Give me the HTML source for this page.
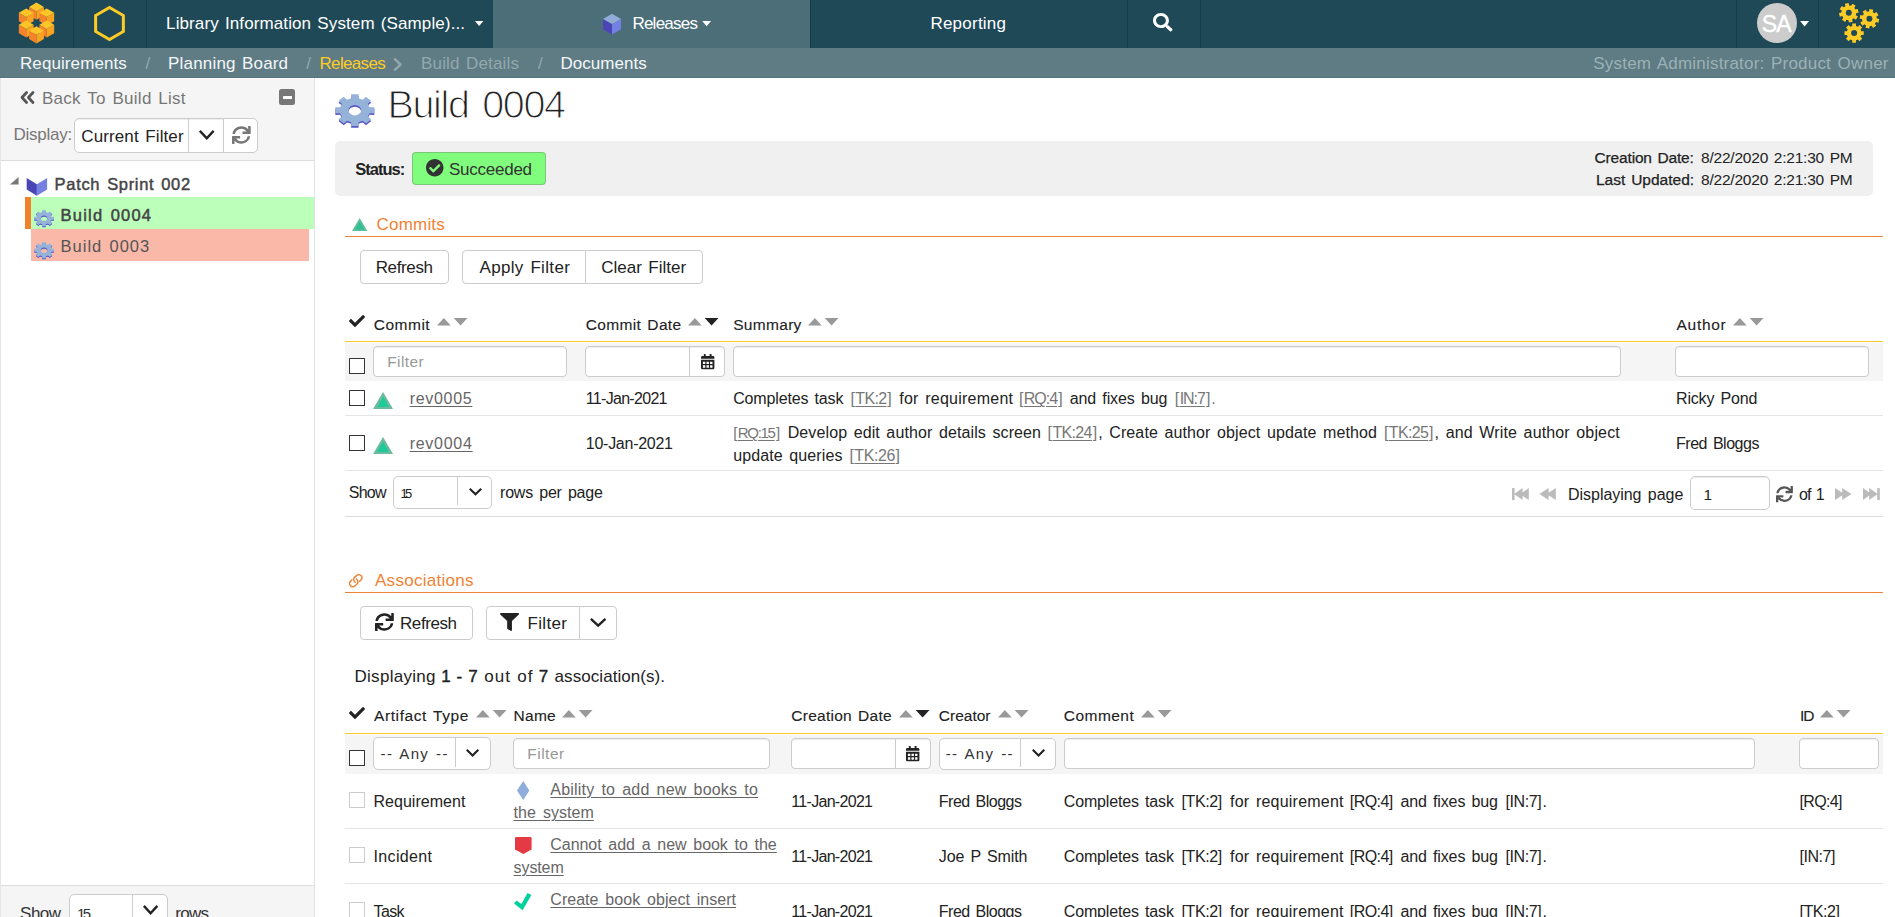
<!DOCTYPE html>
<html lang="en"><head><meta charset="utf-8"><title>Build 0004</title>
<style>
html,body{margin:0;padding:0;background:#fff;}
body{width:1895px;height:917px;overflow:hidden;position:relative;font-family:"Liberation Sans",sans-serif;}
.b{position:absolute;box-sizing:border-box;}
.t{position:absolute;white-space:nowrap;}
svg{display:block;overflow:visible;}
</style></head><body>
<div class="b" style="left:0.00px;top:0.00px;width:1895.00px;height:48.00px;background:#1f4957;"></div>
<div class="b" style="left:493.00px;top:0.00px;width:317.00px;height:48.00px;background:#4c6e78;"></div>
<div class="b" style="left:73.00px;top:0.00px;width:1.00px;height:48.00px;background:#163c48;"></div>
<div class="b" style="left:146.00px;top:0.00px;width:1.00px;height:48.00px;background:#163c48;"></div>
<div class="b" style="left:810.00px;top:0.00px;width:1.00px;height:48.00px;background:#163c48;"></div>
<div class="b" style="left:1127.00px;top:0.00px;width:1.00px;height:48.00px;background:#163c48;"></div>
<div class="b" style="left:1200.00px;top:0.00px;width:1.00px;height:48.00px;background:#163c48;"></div>
<div class="b" style="left:1736.00px;top:0.00px;width:1.00px;height:48.00px;background:#163c48;"></div>
<div class="b" style="left:1818.00px;top:0.00px;width:1.00px;height:48.00px;background:#163c48;"></div>
<div class="b" style="left:0.00px;top:48.00px;width:1895.00px;height:30.00px;background:#5f7c85;border-bottom:1px solid #53737d;"></div>
<div class="b" style="left:0.00px;top:78.00px;width:315.00px;height:839.00px;background:#fff;border-right:1px solid #e2e2e2;border-left:1px solid #e6e6e6;"></div>
<div class="b" style="left:1.00px;top:79.00px;width:313.00px;height:82.00px;background:#f5f5f5;border-bottom:1px solid #ddd;"></div>
<div class="b" style="left:1.00px;top:884.50px;width:313.00px;height:33.00px;background:#f5f5f5;border-top:1px solid #ddd;"></div>
<div class="b" style="left:335.00px;top:141.00px;width:1538.00px;height:55.00px;background:#f0f0f0;border-radius:5px;"></div>
<span class="t" style="left:166.10px;top:15px;font-size:17.0px;line-height:17px;color:#fff;letter-spacing:0.104px;word-spacing:1.36px;">Library Information System (Sample)...</span>
<span class="t" style="left:632.40px;top:15px;font-size:17.0px;line-height:17px;color:#fff;letter-spacing:-0.756px;">Releases</span>
<span class="t" style="left:930.40px;top:15px;font-size:17.0px;line-height:17px;color:#fff;letter-spacing:0.238px;">Reporting</span>
<svg class="b" style="left:475.00px;top:21.00px;" width="8.40" height="5.20" viewBox="0 0 10 6" ><path d="M0 0H10L5 6Z" fill="#fff"/></svg>
<svg class="b" style="left:702.00px;top:21.30px;" width="9.30" height="5.30" viewBox="0 0 10 6" ><path d="M0 0H10L5 6Z" fill="#fff"/></svg>
<svg class="b" style="left:1800.20px;top:20.80px;" width="9.20" height="5.40" viewBox="0 0 10 6" ><path d="M0 0H10L5 6Z" fill="#fff"/></svg>
<div class="b" style="left:1757.00px;top:3.00px;width:40.00px;height:40.00px;background:#ccc;border-radius:50%;"></div>
<span class="t" style="left:1761.80px;top:13px;font-size:23.0px;line-height:23px;color:#fff;letter-spacing:-1.005px;-webkit-text-stroke:0.45px #fff;">SA</span>
<span class="t" style="left:20.00px;top:55px;font-size:17.0px;line-height:17px;color:#f4f7f8;letter-spacing:0.089px;">Requirements</span>
<span class="t" style="left:145.50px;top:55px;font-size:17.0px;line-height:17px;color:#92a8ad;">/</span>
<span class="t" style="left:168.10px;top:55px;font-size:17.0px;line-height:17px;color:#f4f7f8;letter-spacing:0.182px;word-spacing:1.36px;">Planning Board</span>
<span class="t" style="left:306.20px;top:55px;font-size:17.0px;line-height:17px;color:#92a8ad;">/</span>
<span class="t" style="left:319.50px;top:55px;font-size:17.0px;line-height:17px;color:#fdcb26;letter-spacing:-0.670px;">Releases</span>
<svg class="b" style="left:393.30px;top:58.20px;" width="10.00" height="13.00" viewBox="0 0 10 13" ><path d="M1.8 1.2L7.6 6.5L1.8 11.8" fill="none" stroke="#92a8ad" stroke-width="2.4" stroke-linecap="round" stroke-linejoin="round"/></svg>
<span class="t" style="left:421.00px;top:55px;font-size:17.0px;line-height:17px;color:#92a8ad;letter-spacing:0.177px;word-spacing:1.36px;">Build Details</span>
<span class="t" style="left:538.00px;top:55px;font-size:17.0px;line-height:17px;color:#92a8ad;">/</span>
<span class="t" style="left:560.40px;top:55px;font-size:17.0px;line-height:17px;color:#f4f7f8;letter-spacing:0.035px;">Documents</span>
<span class="t" style="left:1593.30px;top:55px;font-size:17.0px;line-height:17px;color:#9cb1b5;letter-spacing:0.195px;word-spacing:1.70px;">System Administrator: Product Owner</span>
<svg class="b" style="left:0.00px;top:0.00px;" width="73.00" height="48.00" viewBox="0 0 73 48" ><path d="M29.10 6.88L36.50 11.15L36.50 19.69L29.10 15.42Z" fill="#f4832a"/><path d="M43.90 6.88L36.50 11.15L36.50 19.69L43.90 15.42Z" fill="#f9a320"/><path d="M36.50 2.61L43.90 6.88L36.50 11.15L29.10 6.88Z" fill="#fdc527"/><path d="M18.84 12.80L26.24 17.08L26.24 25.62L18.84 21.35Z" fill="#f4832a"/><path d="M33.64 12.80L26.24 17.08L26.24 25.62L33.64 21.35Z" fill="#f9a320"/><path d="M26.24 8.53L33.64 12.80L26.24 17.08L18.84 12.80Z" fill="#fdc527"/><path d="M39.36 12.80L46.76 17.08L46.76 25.62L39.36 21.35Z" fill="#f4832a"/><path d="M54.16 12.80L46.76 17.08L46.76 25.62L54.16 21.35Z" fill="#f9a320"/><path d="M46.76 8.53L54.16 12.80L46.76 17.08L39.36 12.80Z" fill="#fdc527"/><path d="M18.84 24.65L26.24 28.92L26.24 37.47L18.84 33.20Z" fill="#f4832a"/><path d="M33.64 24.65L26.24 28.92L26.24 37.47L33.64 33.20Z" fill="#f9a320"/><path d="M26.24 20.38L33.64 24.65L26.24 28.92L18.84 24.65Z" fill="#fdc527"/><path d="M39.36 24.65L46.76 28.92L46.76 37.47L39.36 33.20Z" fill="#f4832a"/><path d="M54.16 24.65L46.76 28.92L46.76 37.47L54.16 33.20Z" fill="#f9a320"/><path d="M46.76 20.38L54.16 24.65L46.76 28.92L39.36 24.65Z" fill="#fdc527"/><path d="M29.10 30.58L36.50 34.85L36.50 43.39L29.10 39.12Z" fill="#f4832a"/><path d="M43.90 30.58L36.50 34.85L36.50 43.39L43.90 39.12Z" fill="#f9a320"/><path d="M36.50 26.31L43.90 30.58L36.50 34.85L29.10 30.58Z" fill="#fdc527"/></svg>
<svg class="b" style="left:73.00px;top:0.00px;" width="73.00" height="48.00" viewBox="73 0 73 48" ><path d="M109.50 7.50L123.36 15.50L123.36 31.50L109.50 39.50L95.64 31.50L95.64 15.50Z" fill="none" stroke="#fdcb26" stroke-width="3" stroke-linejoin="miter"/></svg>
<svg class="b" style="left:600.00px;top:10.00px;" width="24.00" height="28.00" viewBox="600 10 24 28" ><path d="M603.00 18.90L612.00 24.10L612.00 34.49L603.00 29.30Z" fill="#4a45b5"/><path d="M621.00 18.90L612.00 24.10L612.00 34.49L621.00 29.30Z" fill="#7480e2"/><path d="M612.00 13.71L621.00 18.90L612.00 24.10L603.00 18.90Z" fill="#92acd8"/></svg>
<svg class="b" style="left:1152.80px;top:13.20px;" width="19.60" height="18.50" viewBox="0 0 512 512" preserveAspectRatio="none"><path d="M505 442.7L405.3 343c-4.5-4.5-10.6-7-17-7H372c27.6-35.3 44-79.7 44-128C416 93.1 322.9 0 208 0S0 93.1 0 208s93.1 208 208 208c48.3 0 92.7-16.4 128-44v16.3c0 6.4 2.5 12.5 7 17l99.700 99.700c9.400 9.400 24.600 9.400 33.900 0l28.300-28.300c9.400-9.400 9.400-24.600.1-34zM208 336c-70.700 0-128-57.200-128-128 0-70.700 57.200-128 128-128 70.700 0 128 57.200 128 128 0 70.700-57.200 128-128 128z" fill="#fff"/></svg>
<svg class="b" style="left:1830.00px;top:0.00px;" width="65.00" height="48.00" viewBox="1830 0 65 48" ><path fill-rule="evenodd" fill="#fdcb26" d="M1855.43 9.51L1857.81 8.93L1858.60 12.67L1856.19 13.11L1855.81 15.16L1857.90 16.43L1855.82 19.64L1853.81 18.25L1852.09 19.43L1852.67 21.81L1848.93 22.60L1848.49 20.19L1846.44 19.81L1845.17 21.90L1841.96 19.82L1843.35 17.81L1842.17 16.09L1839.79 16.67L1839.00 12.93L1841.41 12.49L1841.79 10.44L1839.70 9.17L1841.78 5.96L1843.79 7.35L1845.51 6.17L1844.93 3.79L1848.67 3.00L1849.11 5.41L1851.16 5.79L1852.43 3.70L1855.64 5.78L1854.25 7.79ZM1845.80 12.80A3.00 3.00 0 1 0 1851.80 12.80A3.00 3.00 0 1 0 1845.80 12.80Z"/><path fill-rule="evenodd" fill="#fdcb26" d="M1876.79 18.49L1879.20 18.93L1878.41 22.67L1876.03 22.09L1874.85 23.81L1876.24 25.82L1873.03 27.90L1871.76 25.81L1869.71 26.19L1869.27 28.60L1865.53 27.81L1866.11 25.43L1864.39 24.25L1862.38 25.64L1860.30 22.43L1862.39 21.16L1862.01 19.11L1859.60 18.67L1860.39 14.93L1862.77 15.51L1863.95 13.79L1862.56 11.78L1865.77 9.70L1867.04 11.79L1869.09 11.41L1869.53 9.00L1873.27 9.79L1872.69 12.17L1874.41 13.35L1876.42 11.96L1878.50 15.17L1876.41 16.44ZM1866.40 18.80A3.00 3.00 0 1 0 1872.40 18.80A3.00 3.00 0 1 0 1866.40 18.80Z"/><path fill-rule="evenodd" fill="#fdcb26" d="M1861.27 31.26L1863.71 31.19L1863.71 35.01L1861.27 34.94L1860.47 36.87L1862.25 38.55L1859.55 41.25L1857.87 39.47L1855.94 40.27L1856.01 42.71L1852.19 42.71L1852.26 40.27L1850.33 39.47L1848.65 41.25L1845.95 38.55L1847.73 36.87L1846.93 34.94L1844.49 35.01L1844.49 31.19L1846.93 31.26L1847.73 29.33L1845.95 27.65L1848.65 24.95L1850.33 26.73L1852.26 25.93L1852.19 23.49L1856.01 23.49L1855.94 25.93L1857.87 26.73L1859.55 24.95L1862.25 27.65L1860.47 29.33ZM1851.10 33.10A3.00 3.00 0 1 0 1857.10 33.10A3.00 3.00 0 1 0 1851.10 33.10Z"/></svg>
<svg class="b" style="left:20.00px;top:91.30px;" width="15.00" height="13.00" viewBox="0 0 15 13" ><path d="M6.6 1.5L2 6.5L6.6 11.5M13 1.5L8.4 6.5L13 11.5" fill="none" stroke="#555" stroke-width="2.7" stroke-linecap="round" stroke-linejoin="round"/></svg>
<span class="t" style="left:42.00px;top:90px;font-size:17.0px;line-height:17px;color:#777;letter-spacing:0.272px;word-spacing:1.70px;">Back To Build List</span>
<div class="b" style="left:279.30px;top:89.30px;width:16.20px;height:15.40px;background:#777;border-radius:2.5px;"></div>
<div class="b" style="left:282.50px;top:95.60px;width:9.80px;height:3.00px;background:#fff;border-radius:.5px;"></div>
<span class="t" style="left:13.60px;top:126px;font-size:17.0px;line-height:17px;color:#777;letter-spacing:-0.262px;">Display:</span>
<div class="b" style="left:74.00px;top:118.00px;width:150.00px;height:35.00px;background:#fff;border:1px solid #ccc;border-radius:5px 0 0 5px;box-shadow:inset 0 1px 1px rgba(0,0,0,.075);"></div>
<div class="b" style="left:188.00px;top:119.00px;width:1.00px;height:33.00px;background:#ccc;"></div>
<span class="t" style="left:81.30px;top:128px;font-size:17.0px;line-height:17px;color:#222;letter-spacing:0.108px;word-spacing:1.70px;">Current Filter</span>
<svg class="b" style="left:198.80px;top:130.00px;" width="15.50" height="10.00" viewBox="0 0 15.50 10.00" ><path d="M0.86 0.86L7.75 8.27L14.64 0.86" fill="none" stroke="#222" stroke-width="2.40" stroke-linejoin="miter"/></svg>
<div class="b" style="left:223.00px;top:118.00px;width:35.00px;height:34.50px;background:#fff;border:1px solid #ccc;border-radius:0 5px 5px 0;"></div>
<svg class="b" style="left:231.70px;top:126.00px;" width="18.70" height="18.00" viewBox="0 0 512 512" preserveAspectRatio="none"><path d="M440.65 12.57l4 82.77A247.16 247.16 0 0 0 255.83 8C134.73 8 33.91 94.92 12.29 209.82A12 12 0 0 0 24.09 224h49.05a12 12 0 0 0 11.67-9.26 175.91 175.91 0 0 1 317-56.94l-101.46-4.86a12 12 0 0 0-12.57 12v47.41a12 12 0 0 0 12 12H500a12 12 0 0 0 12-12V12a12 12 0 0 0-12-12h-47.37a12 12 0 0 0-11.98 12.57zM255.83 432a175.61 175.61 0 0 1-146-77.8l101.8 4.87a12 12 0 0 0 12.57-12v-47.4a12 12 0 0 0-12-12H12a12 12 0 0 0-12 12V500a12 12 0 0 0 12 12h47.35a12 12 0 0 0 12-12.6l-4.15-82.57A247.17 247.17 0 0 0 255.83 504c121.11 0 221.93-86.92 243.55-201.82a12 12 0 0 0-11.8-14.18h-49.05a12 12 0 0 0-11.67 9.26A175.86 175.86 0 0 1 255.83 432z" fill="#777"/></svg>
<svg class="b" style="left:9.60px;top:176.50px;" width="8.60" height="7.60" viewBox="0 0 8.6 7.6" ><path d="M8.6 0V7.6H0Z" fill="#777"/></svg>
<svg class="b" style="left:26.00px;top:176.00px;" width="23.00" height="21.00" viewBox="26 176 23 21" ><path d="M26.7 178L36.9 184.2V195.7L26.7 189.5Z" fill="#4a45b5"/><path d="M47.1 178L36.9 184.2V195.7L47.1 189.5Z" fill="#7480e2"/></svg>
<span class="t" style="left:54.60px;top:176px;font-size:16.5px;line-height:17px;color:#444;letter-spacing:0.685px;word-spacing:1.65px;-webkit-text-stroke:0.45px #444;">Patch Sprint 002</span>
<div class="b" style="left:25.00px;top:197.00px;width:6.00px;height:32.00px;background:#f0822e;"></div>
<div class="b" style="left:31.00px;top:197.00px;width:283.00px;height:32.00px;background:#bbffbb;"></div>
<div class="b" style="left:31.00px;top:229.00px;width:278.00px;height:32.00px;background:#f9b8a8;"></div>
<svg class="b" style="left:32.00px;top:208.20px;" width="24.10" height="21.50" viewBox="32.00 208.20 24.10 21.50" ><path fill-rule="evenodd" fill="#5a57c9" d="M51.46 218.00L53.92 217.95L53.92 221.05L51.46 221.00L50.59 222.71L52.37 224.10L49.69 226.29L47.99 224.84L45.89 225.55L45.95 227.55L42.15 227.55L42.21 225.55L40.11 224.84L38.41 226.29L35.73 224.10L37.51 222.71L36.64 221.00L34.18 221.05L34.18 217.95L36.64 218.00L37.51 216.29L35.73 214.90L38.41 212.71L40.11 214.16L42.21 213.45L42.15 211.45L45.95 211.45L45.89 213.45L47.99 214.16L49.69 212.71L52.37 214.90L50.59 216.29ZM40.83 219.50A3.22 2.62 0 1 0 47.27 219.50A3.22 2.62 0 1 0 40.83 219.50Z"/><path fill-rule="evenodd" fill="#95b3d9" d="M51.46 216.90L53.92 216.85L53.92 219.95L51.46 219.90L50.59 221.61L52.37 223.00L49.69 225.19L47.99 223.74L45.89 224.45L45.95 226.45L42.15 226.45L42.21 224.45L40.11 223.74L38.41 225.19L35.73 223.00L37.51 221.61L36.64 219.90L34.18 219.95L34.18 216.85L36.64 216.90L37.51 215.19L35.73 213.80L38.41 211.61L40.11 213.06L42.21 212.35L42.15 210.35L45.95 210.35L45.89 212.35L47.99 213.06L49.69 211.61L52.37 213.80L50.59 215.19ZM40.83 218.40A3.22 2.62 0 1 0 47.27 218.40A3.22 2.62 0 1 0 40.83 218.40Z"/></svg>
<svg class="b" style="left:32.00px;top:240.10px;" width="24.10" height="21.50" viewBox="32.00 240.10 24.10 21.50" ><path fill-rule="evenodd" fill="#5a57c9" d="M51.46 249.90L53.92 249.85L53.92 252.95L51.46 252.90L50.59 254.61L52.37 256.00L49.69 258.19L47.99 256.74L45.89 257.45L45.95 259.45L42.15 259.45L42.21 257.45L40.11 256.74L38.41 258.19L35.73 256.00L37.51 254.61L36.64 252.90L34.18 252.95L34.18 249.85L36.64 249.90L37.51 248.19L35.73 246.80L38.41 244.61L40.11 246.06L42.21 245.35L42.15 243.35L45.95 243.35L45.89 245.35L47.99 246.06L49.69 244.61L52.37 246.80L50.59 248.19ZM40.83 251.40A3.22 2.62 0 1 0 47.27 251.40A3.22 2.62 0 1 0 40.83 251.40Z"/><path fill-rule="evenodd" fill="#95b3d9" d="M51.46 248.80L53.92 248.75L53.92 251.85L51.46 251.80L50.59 253.51L52.37 254.90L49.69 257.09L47.99 255.64L45.89 256.35L45.95 258.35L42.15 258.35L42.21 256.35L40.11 255.64L38.41 257.09L35.73 254.90L37.51 253.51L36.64 251.80L34.18 251.85L34.18 248.75L36.64 248.80L37.51 247.09L35.73 245.70L38.41 243.51L40.11 244.96L42.21 244.25L42.15 242.25L45.95 242.25L45.89 244.25L47.99 244.96L49.69 243.51L52.37 245.70L50.59 247.09ZM40.83 250.30A3.22 2.62 0 1 0 47.27 250.30A3.22 2.62 0 1 0 40.83 250.30Z"/></svg>
<span class="t" style="left:60.60px;top:207px;font-size:16.5px;line-height:17px;color:#444;letter-spacing:1.199px;word-spacing:1.65px;-webkit-text-stroke:0.50px #444;">Build 0004</span>
<span class="t" style="left:60.60px;top:238px;font-size:16.5px;line-height:17px;color:#555;letter-spacing:0.999px;word-spacing:1.65px;">Build 0003</span>
<span class="t" style="left:20.00px;top:905px;font-size:17.0px;line-height:17px;color:#333;letter-spacing:-0.462px;">Show</span>
<div class="b" style="left:68.60px;top:893.60px;width:99.40px;height:34.00px;background:#fff;border:1px solid #ccc;border-radius:5px;"></div>
<div class="b" style="left:132.40px;top:894.60px;width:1.00px;height:30.00px;background:#ccc;"></div>
<span class="t" style="left:77.00px;top:906px;font-size:15.0px;line-height:15px;color:#333;letter-spacing:-2.650px;">15</span>
<svg class="b" style="left:143.10px;top:905.00px;" width="15.20" height="10.00" viewBox="0 0 15.20 10.00" ><path d="M0.86 0.86L7.60 8.27L14.34 0.86" fill="none" stroke="#222" stroke-width="2.40" stroke-linejoin="miter"/></svg>
<span class="t" style="left:175.20px;top:905px;font-size:17.0px;line-height:17px;color:#333;letter-spacing:-0.690px;">rows</span>
<svg class="b" style="left:333.20px;top:91.90px;" width="43.70" height="38.10" viewBox="333.20 91.90 43.70 38.10" ><path fill-rule="evenodd" fill="#5a57c9" d="M369.69 108.83L374.54 108.74L374.54 114.86L369.69 114.77L367.97 118.15L371.48 120.89L366.18 125.21L362.83 122.35L358.69 123.75L358.80 127.71L351.30 127.71L351.41 123.75L347.27 122.35L343.92 125.21L338.62 120.89L342.13 118.15L340.41 114.77L335.56 114.86L335.56 108.74L340.41 108.83L342.13 105.45L338.62 102.71L343.92 98.39L347.27 101.25L351.41 99.85L351.30 95.89L358.80 95.89L358.69 99.85L362.83 101.25L366.18 98.39L371.48 102.71L367.97 105.45ZM348.70 111.80A6.35 5.18 0 1 0 361.40 111.80A6.35 5.18 0 1 0 348.70 111.80Z"/><path fill-rule="evenodd" fill="#95b3d9" d="M369.69 107.13L374.54 107.04L374.54 113.16L369.69 113.07L367.97 116.45L371.48 119.19L366.18 123.51L362.83 120.65L358.69 122.05L358.80 126.01L351.30 126.01L351.41 122.05L347.27 120.65L343.92 123.51L338.62 119.19L342.13 116.45L340.41 113.07L335.56 113.16L335.56 107.04L340.41 107.13L342.13 103.75L338.62 101.01L343.92 96.69L347.27 99.55L351.41 98.15L351.30 94.19L358.80 94.19L358.69 98.15L362.83 99.55L366.18 96.69L371.48 101.01L367.97 103.75ZM348.70 110.10A6.35 5.18 0 1 0 361.40 110.10A6.35 5.18 0 1 0 348.70 110.10Z"/></svg>
<span class="t" style="left:387.40px;top:84px;font-size:39.5px;line-height:40px;color:#222;letter-spacing:-1.332px;word-spacing:3.95px;-webkit-text-stroke:1.15px #fff;">Build 0004</span>
<span class="t" style="left:355.20px;top:161px;font-size:16.5px;line-height:17px;color:#222;letter-spacing:-0.972px;font-weight:700;">Status:</span>
<div class="b" style="left:412.40px;top:152.00px;width:133.20px;height:32.60px;background:#80fd7c;border:1px solid rgba(110,110,110,.38);border-radius:4px;"></div>
<svg class="b" style="left:426.00px;top:159.40px;" width="17.50" height="17.50" viewBox="8 8 496 496" preserveAspectRatio="none"><path d="M504 256c0 136.967-111.033 248-248 248S8 392.967 8 256 119.033 8 256 8s248 111.033 248 248zM227.314 387.314l184-184c6.248-6.248 6.248-16.379 0-22.627l-22.627-22.627c-6.248-6.249-16.379-6.249-22.628 0L216 308.118l-70.059-70.059c-6.248-6.248-16.379-6.248-22.628 0l-22.627 22.627c-6.248 6.248-6.248 16.379 0 22.627l104 104c6.249 6.249 16.379 6.249 22.628.001z" fill="#333"/></svg>
<span class="t" style="left:448.90px;top:161px;font-size:17.0px;line-height:17px;color:#333;letter-spacing:-0.236px;">Succeeded</span>
<span class="t" style="left:1594.60px;top:150px;font-size:15.5px;line-height:16px;color:#222;letter-spacing:-0.171px;word-spacing:1.55px;-webkit-text-stroke:0.25px #222;">Creation Date:</span>
<span class="t" style="left:1701.00px;top:150px;font-size:15.5px;line-height:16px;color:#222;letter-spacing:-0.206px;word-spacing:1.55px;">8/22/2020 2:21:30 PM</span>
<span class="t" style="left:1596.00px;top:172px;font-size:15.5px;line-height:16px;color:#222;word-spacing:1.55px;-webkit-text-stroke:0.25px #222;">Last Updated:</span>
<span class="t" style="left:1701.00px;top:172px;font-size:15.5px;line-height:16px;color:#222;letter-spacing:-0.206px;word-spacing:1.55px;">8/22/2020 2:21:30 PM</span>
<svg class="b" style="left:351.70px;top:218.00px;" width="15.40" height="13.00" viewBox="0 0 20 17" ><path d="M10 0L20 17H0Z" fill="#5fbf9d"/><path d="M10 4.6L16 15H4Z" fill="#2fbf93"/></svg>
<span class="t" style="left:376.50px;top:216px;font-size:17.0px;line-height:17px;color:#f08234;letter-spacing:0.206px;">Commits</span>
<div class="b" style="left:345.00px;top:236.00px;width:1538.00px;height:1.00px;background:#f08234;"></div>
<div class="b" style="left:360.00px;top:250.00px;width:89.00px;height:34.00px;background:#fff;border:1px solid #ccc;border-radius:4px;"></div>
<span class="t" style="left:375.70px;top:259px;font-size:17.0px;line-height:17px;color:#222;letter-spacing:-0.367px;">Refresh</span>
<div class="b" style="left:462.00px;top:250.00px;width:123.60px;height:34.00px;background:#fff;border:1px solid #ccc;border-radius:4px 0 0 4px;"></div>
<div class="b" style="left:584.60px;top:250.00px;width:118.40px;height:34.00px;background:#fff;border:1px solid #ccc;border-radius:0 4px 4px 0;"></div>
<span class="t" style="left:479.50px;top:259px;font-size:17.0px;line-height:17px;color:#222;letter-spacing:0.327px;word-spacing:1.70px;">Apply Filter</span>
<span class="t" style="left:601.30px;top:259px;font-size:17.0px;line-height:17px;color:#222;word-spacing:1.70px;">Clear Filter</span>
<svg class="b" style="left:349.00px;top:315.40px;" width="16.00" height="12.00" viewBox="0 65 512 382" preserveAspectRatio="none"><path d="M173.898 439.404l-166.4-166.4c-9.997-9.997-9.997-26.206 0-36.204l36.203-36.204c9.997-9.998 26.207-9.998 36.204 0L192 312.69 432.095 72.596c9.997-9.997 26.207-9.997 36.204 0l36.203 36.204c9.997 9.997 9.997 26.206 0 36.204l-294.4 294.401c-9.998 9.997-26.207 9.997-36.204-.001z" fill="#222"/></svg>
<span class="t" style="left:373.70px;top:317px;font-size:15.5px;line-height:16px;color:#222;letter-spacing:0.520px;-webkit-text-stroke:0.12px #222;">Commit</span>
<svg class="b" style="left:437.30px;top:318.40px;" width="30.50" height="7.60" viewBox="0 0 30.5 7.6" ><path d="M0 7.6L6.85 0L13.7 7.6Z" fill="#999"/><path d="M16.7 0H30.5L23.6 7.6Z" fill="#999"/></svg>
<span class="t" style="left:585.80px;top:317px;font-size:15.5px;line-height:16px;color:#222;letter-spacing:0.331px;word-spacing:1.55px;-webkit-text-stroke:0.12px #222;">Commit Date</span>
<svg class="b" style="left:688.40px;top:318.40px;" width="30.50" height="7.60" viewBox="0 0 30.5 7.6" ><path d="M0 7.6L6.85 0L13.7 7.6Z" fill="#999"/><path d="M16.7 0H30.5L23.6 7.6Z" fill="#222"/></svg>
<span class="t" style="left:733.20px;top:317px;font-size:15.5px;line-height:16px;color:#222;letter-spacing:0.310px;-webkit-text-stroke:0.12px #222;">Summary</span>
<svg class="b" style="left:808.40px;top:318.40px;" width="30.50" height="7.60" viewBox="0 0 30.5 7.6" ><path d="M0 7.6L6.85 0L13.7 7.6Z" fill="#999"/><path d="M16.7 0H30.5L23.6 7.6Z" fill="#999"/></svg>
<span class="t" style="left:1676.50px;top:317px;font-size:15.5px;line-height:16px;color:#222;letter-spacing:0.711px;-webkit-text-stroke:0.12px #222;">Author</span>
<svg class="b" style="left:1733.00px;top:318.40px;" width="30.50" height="7.60" viewBox="0 0 30.5 7.6" ><path d="M0 7.6L6.85 0L13.7 7.6Z" fill="#999"/><path d="M16.7 0H30.5L23.6 7.6Z" fill="#999"/></svg>
<div class="b" style="left:345.00px;top:341.00px;width:1538.00px;height:1.00px;background:#fdc826;"></div>
<div class="b" style="left:345.00px;top:342.00px;width:1538.00px;height:1.00px;background:#f8fafc;"></div>
<div class="b" style="left:345.00px;top:343.00px;width:1538.00px;height:37.50px;background:#f5f5f5;"></div>
<div class="b" style="left:349.00px;top:358.00px;width:16.00px;height:16.00px;background:#fff;border:1.5px solid #333;border-radius:.5px;"></div>
<div class="b" style="left:373.00px;top:346.00px;width:194.00px;height:31.00px;background:#fff;border:1px solid #ccc;border-radius:4px;box-shadow:inset 0 1px 1px rgba(0,0,0,.075);"></div>
<span class="t" style="left:387.20px;top:354px;font-size:15.5px;line-height:16px;color:#999;letter-spacing:0.418px;">Filter</span>
<div class="b" style="left:585.20px;top:346.00px;width:139.50px;height:31.00px;background:#fff;border:1px solid #ccc;border-radius:4px;box-shadow:inset 0 1px 1px rgba(0,0,0,.075);"></div>
<div class="b" style="left:689.00px;top:347.00px;width:1.00px;height:29.00px;background:#ccc;"></div>
<svg class="b" style="left:700.70px;top:353.80px;" width="13.40" height="15.40" viewBox="0 0 14 16" ><path fill-rule="evenodd" fill="#222" d="M1.5 2H12.5Q14 2 14 3.5V5H0V3.5Q0 2 1.5 2ZM0 6H14V14.5Q14 16 12.5 16H1.5Q0 16 0 14.5ZM2 8V10.5H4.5V8ZM5.75 8V10.5H8.25V8ZM9.5 8V10.5H12V8ZM2 11.7V14.2H4.5V11.7ZM5.75 11.7V14.2H8.25V11.7ZM9.5 11.7V14.2H12V11.7Z"/><rect x="3" y="0" width="2" height="3.4" rx=".5" fill="#222"/><rect x="9" y="0" width="2" height="3.4" rx=".5" fill="#222"/></svg>
<div class="b" style="left:733.00px;top:346.00px;width:888.00px;height:31.00px;background:#fff;border:1px solid #ccc;border-radius:4px;box-shadow:inset 0 1px 1px rgba(0,0,0,.075);"></div>
<div class="b" style="left:1675.00px;top:346.00px;width:194.00px;height:31.00px;background:#fff;border:1px solid #ccc;border-radius:4px;box-shadow:inset 0 1px 1px rgba(0,0,0,.075);"></div>
<div class="b" style="left:349.00px;top:390.00px;width:16.00px;height:16.00px;background:#fff;border:1.3px solid #333;border-radius:.5px;"></div>
<svg class="b" style="left:373.10px;top:391.80px;" width="20.10" height="17.00" viewBox="0 0 20 17" ><path d="M10 0L20 17H0Z" fill="#6dbb9c"/><path d="M10 4.6L16 15H4Z" fill="#1fc99a"/></svg>
<span class="t" style="left:409.70px;top:391px;font-size:16.0px;line-height:16px;color:#666;letter-spacing:0.693px;text-decoration:underline;text-decoration-thickness:1px;text-underline-offset:2px;">rev0005</span>
<span class="t" style="left:585.80px;top:391px;font-size:16.0px;line-height:16px;color:#222;letter-spacing:-0.694px;">11-Jan-2021</span>
<span class="t" style="left:733.20px;top:391px;font-size:16.0px;line-height:16px;color:#222;letter-spacing:-0.149px;word-spacing:1.92px;">Completes task</span>
<span class="t" style="left:850.50px;top:391px;font-size:16.0px;line-height:16px;color:#777;">[</span>
<span class="t" style="left:887.22px;top:391px;font-size:16.0px;line-height:16px;color:#777;">]</span>
<span class="t" style="left:855.35px;top:391px;font-size:16.0px;line-height:16px;color:#777;letter-spacing:-0.683px;text-decoration:underline;text-decoration-thickness:1px;text-underline-offset:2px;">TK:2</span>
<span class="t" style="left:899.30px;top:391px;font-size:16.0px;line-height:16px;color:#222;letter-spacing:0.236px;word-spacing:1.92px;">for requirement</span>
<span class="t" style="left:1019.00px;top:391px;font-size:16.0px;line-height:16px;color:#777;">[</span>
<span class="t" style="left:1058.22px;top:391px;font-size:16.0px;line-height:16px;color:#777;">]</span>
<span class="t" style="left:1023.85px;top:391px;font-size:16.0px;line-height:16px;color:#777;letter-spacing:-1.050px;text-decoration:underline;text-decoration-thickness:1px;text-underline-offset:2px;">RQ:4</span>
<span class="t" style="left:1069.70px;top:391px;font-size:16.0px;line-height:16px;color:#222;letter-spacing:-0.112px;word-spacing:1.92px;">and fixes bug</span>
<span class="t" style="left:1174.80px;top:391px;font-size:16.0px;line-height:16px;color:#777;">[</span>
<span class="t" style="left:1206.02px;top:391px;font-size:16.0px;line-height:16px;color:#777;">]</span>
<span class="t" style="left:1179.64px;top:391px;font-size:16.0px;line-height:16px;color:#777;letter-spacing:-1.050px;text-decoration:underline;text-decoration-thickness:1px;text-underline-offset:2px;">IN:7</span>
<span class="t" style="left:1211.30px;top:391px;font-size:16.0px;line-height:16px;color:#777;">.</span>
<span class="t" style="left:1676.00px;top:391px;font-size:16.0px;line-height:16px;color:#222;letter-spacing:-0.164px;word-spacing:1.92px;">Ricky Pond</span>
<div class="b" style="left:345.00px;top:415.00px;width:1538.00px;height:1.00px;background:#e5e5e5;"></div>
<div class="b" style="left:349.00px;top:435.00px;width:16.00px;height:16.00px;background:#fff;border:1.3px solid #333;border-radius:.5px;"></div>
<svg class="b" style="left:373.10px;top:437.00px;" width="20.10" height="17.00" viewBox="0 0 20 17" ><path d="M10 0L20 17H0Z" fill="#6dbb9c"/><path d="M10 4.6L16 15H4Z" fill="#1fc99a"/></svg>
<span class="t" style="left:409.70px;top:436px;font-size:16.0px;line-height:16px;color:#666;letter-spacing:0.727px;text-decoration:underline;text-decoration-thickness:1px;text-underline-offset:2px;">rev0004</span>
<span class="t" style="left:585.80px;top:436px;font-size:16.0px;line-height:16px;color:#222;letter-spacing:-0.264px;">10-Jan-2021</span>
<span class="t" style="left:733.20px;top:425px;font-size:15.0px;line-height:15px;color:#777;">[</span>
<span class="t" style="left:776.10px;top:425px;font-size:15.0px;line-height:15px;color:#777;">]</span>
<span class="t" style="left:737.77px;top:425px;font-size:15.0px;line-height:15px;color:#777;letter-spacing:-1.296px;text-decoration:underline;text-decoration-thickness:1px;text-underline-offset:2px;">RQ:15</span>
<span class="t" style="left:787.70px;top:425px;font-size:16.0px;line-height:16px;color:#222;letter-spacing:0.112px;word-spacing:1.92px;">Develop edit author details screen</span>
<span class="t" style="left:1047.60px;top:425px;font-size:16.0px;line-height:16px;color:#777;">[</span>
<span class="t" style="left:1092.72px;top:425px;font-size:16.0px;line-height:16px;color:#777;">]</span>
<span class="t" style="left:1052.44px;top:425px;font-size:16.0px;line-height:16px;color:#777;letter-spacing:-0.652px;text-decoration:underline;text-decoration-thickness:1px;text-underline-offset:2px;">TK:24</span>
<span class="t" style="left:1098.20px;top:425px;font-size:16.0px;line-height:16px;color:#222;letter-spacing:0.119px;word-spacing:1.92px;">, Create author object update method</span>
<span class="t" style="left:1384.00px;top:425px;font-size:16.0px;line-height:16px;color:#777;">[</span>
<span class="t" style="left:1429.12px;top:425px;font-size:16.0px;line-height:16px;color:#777;">]</span>
<span class="t" style="left:1388.85px;top:425px;font-size:16.0px;line-height:16px;color:#777;letter-spacing:-0.653px;text-decoration:underline;text-decoration-thickness:1px;text-underline-offset:2px;">TK:25</span>
<span class="t" style="left:1434.60px;top:425px;font-size:16.0px;line-height:16px;color:#222;letter-spacing:0.143px;word-spacing:1.92px;">, and Write author object</span>
<span class="t" style="left:733.20px;top:448px;font-size:16.0px;line-height:16px;color:#222;letter-spacing:0.118px;word-spacing:1.92px;">update queries</span>
<span class="t" style="left:849.50px;top:448px;font-size:16.0px;line-height:16px;color:#777;">[</span>
<span class="t" style="left:895.52px;top:448px;font-size:16.0px;line-height:16px;color:#777;">]</span>
<span class="t" style="left:854.35px;top:448px;font-size:16.0px;line-height:16px;color:#777;letter-spacing:-0.428px;text-decoration:underline;text-decoration-thickness:1px;text-underline-offset:2px;">TK:26</span>
<span class="t" style="left:1676.00px;top:436px;font-size:16.0px;line-height:16px;color:#222;letter-spacing:-0.476px;word-spacing:1.92px;">Fred Bloggs</span>
<div class="b" style="left:345.00px;top:470.00px;width:1538.00px;height:1.00px;background:#e5e5e5;"></div>
<span class="t" style="left:348.70px;top:485px;font-size:16.0px;line-height:16px;color:#222;letter-spacing:-0.727px;">Show</span>
<div class="b" style="left:393.20px;top:476.40px;width:99.30px;height:32.20px;background:#fff;border:1px solid #ccc;border-radius:5px;"></div>
<div class="b" style="left:457.00px;top:477.40px;width:1.00px;height:28.00px;background:#ccc;"></div>
<span class="t" style="left:400.60px;top:487px;font-size:13.0px;line-height:13px;color:#222;letter-spacing:-2.730px;">15</span>
<svg class="b" style="left:469.00px;top:487.90px;" width="13.00" height="7.80" viewBox="0 0 13.00 7.80" ><path d="M0.76 0.76L6.50 6.29L12.24 0.76" fill="none" stroke="#222" stroke-width="2.10" stroke-linejoin="miter"/></svg>
<span class="t" style="left:500.00px;top:485px;font-size:16.0px;line-height:16px;color:#222;letter-spacing:-0.192px;word-spacing:1.92px;">rows per page</span>
<div class="b" style="left:345.00px;top:516.00px;width:1538.00px;height:1.00px;background:#ddd;"></div>
<svg class="b" style="left:1512.30px;top:488.20px;" width="16.80" height="12.20" viewBox="0 0 16.8 12" ><rect x="0" y="0" width="2.6" height="12" fill="#bbb"/><path d="M10.6 0V12L2 6ZM16.8 0V12L8.2 6Z" fill="#bbb"/></svg>
<svg class="b" style="left:1539.40px;top:488.20px;" width="16.80" height="12.20" viewBox="0 0 16.8 12" ><path d="M9.6 0V12L0.4 6ZM16.8 0V12L7.6 6Z" fill="#bbb"/></svg>
<span class="t" style="left:1568.00px;top:487px;font-size:16.0px;line-height:16px;color:#222;letter-spacing:-0.033px;word-spacing:1.92px;">Displaying page</span>
<div class="b" style="left:1690.20px;top:476.40px;width:79.80px;height:34.00px;background:#fff;border:1px solid #ccc;border-radius:5px;box-shadow:inset 0 1px 1px rgba(0,0,0,.075);"></div>
<span class="t" style="left:1703.40px;top:487px;font-size:15.5px;line-height:16px;color:#222;">1</span>
<svg class="b" style="left:1775.90px;top:486.10px;" width="16.90" height="16.30" viewBox="0 0 512 512" preserveAspectRatio="none"><path d="M440.65 12.57l4 82.77A247.16 247.16 0 0 0 255.83 8C134.73 8 33.91 94.92 12.29 209.82A12 12 0 0 0 24.09 224h49.05a12 12 0 0 0 11.67-9.26 175.91 175.91 0 0 1 317-56.94l-101.46-4.86a12 12 0 0 0-12.57 12v47.41a12 12 0 0 0 12 12H500a12 12 0 0 0 12-12V12a12 12 0 0 0-12-12h-47.37a12 12 0 0 0-11.98 12.57zM255.83 432a175.61 175.61 0 0 1-146-77.8l101.8 4.87a12 12 0 0 0 12.57-12v-47.4a12 12 0 0 0-12-12H12a12 12 0 0 0-12 12V500a12 12 0 0 0 12 12h47.35a12 12 0 0 0 12-12.6l-4.15-82.57A247.17 247.17 0 0 0 255.83 504c121.11 0 221.93-86.92 243.55-201.82a12 12 0 0 0-11.8-14.18h-49.05a12 12 0 0 0-11.67 9.26A175.86 175.86 0 0 1 255.83 432z" fill="#555"/></svg>
<span class="t" style="left:1799.00px;top:487px;font-size:16.0px;line-height:16px;color:#222;letter-spacing:-1.013px;word-spacing:1.92px;">of 1</span>
<svg class="b" style="left:1835.00px;top:488.20px;" width="16.80" height="12.20" viewBox="0 0 16.8 12" ><path d="M0 0V12L9.2 6ZM7.2 0V12L16.4 6Z" fill="#bbb"/></svg>
<svg class="b" style="left:1862.60px;top:488.20px;" width="16.80" height="12.20" viewBox="0 0 16.8 12" ><rect x="14.2" y="0" width="2.6" height="12" fill="#bbb"/><path d="M0 0V12L8.6 6ZM6.2 0V12L14.8 6Z" fill="#bbb"/></svg>
<svg class="b" style="left:349.00px;top:574.30px;" width="13.60" height="13.50" viewBox="0 0 13.6 13.5" ><g fill="none" stroke="#f08234" stroke-width="1.45" stroke-linecap="round" stroke-linejoin="round"><path d="M6.10 8.40C5.85 7.99 4.73 6.77 4.60 5.95C4.47 5.13 4.67 4.31 5.30 3.50C5.93 2.69 7.58 1.55 8.40 1.07C9.22 0.59 9.53 0.44 10.20 0.60C10.87 0.76 11.93 1.42 12.40 2.00C12.87 2.58 13.05 3.44 13.00 4.10C12.95 4.76 12.53 5.42 12.10 5.95C11.67 6.48 10.68 7.08 10.40 7.30"/><path d="M2.75 6.10C2.44 6.43 1.26 7.42 0.90 8.10C0.54 8.78 0.45 9.53 0.60 10.20C0.75 10.87 1.27 11.67 1.80 12.10C2.33 12.53 3.16 12.80 3.80 12.80C4.44 12.80 4.93 12.58 5.65 12.10C6.37 11.62 7.57 10.57 8.10 9.90C8.63 9.23 8.77 8.71 8.85 8.10C8.93 7.49 8.81 6.77 8.55 6.25C8.29 5.73 7.51 5.21 7.30 5.00"/></g></svg>
<span class="t" style="left:375.00px;top:572px;font-size:17.0px;line-height:17px;color:#f08234;letter-spacing:0.277px;">Associations</span>
<div class="b" style="left:345.00px;top:592.00px;width:1538.00px;height:1.00px;background:#f08234;"></div>
<div class="b" style="left:360.00px;top:606.00px;width:113.00px;height:34.00px;background:#fff;border:1px solid #ccc;border-radius:4px;"></div>
<svg class="b" style="left:375.00px;top:613.00px;" width="18.80" height="18.00" viewBox="0 0 512 512" preserveAspectRatio="none"><path d="M440.65 12.57l4 82.77A247.16 247.16 0 0 0 255.83 8C134.73 8 33.91 94.92 12.29 209.82A12 12 0 0 0 24.09 224h49.05a12 12 0 0 0 11.67-9.26 175.91 175.91 0 0 1 317-56.94l-101.46-4.86a12 12 0 0 0-12.57 12v47.41a12 12 0 0 0 12 12H500a12 12 0 0 0 12-12V12a12 12 0 0 0-12-12h-47.37a12 12 0 0 0-11.98 12.57zM255.83 432a175.61 175.61 0 0 1-146-77.8l101.8 4.87a12 12 0 0 0 12.57-12v-47.4a12 12 0 0 0-12-12H12a12 12 0 0 0-12 12V500a12 12 0 0 0 12 12h47.35a12 12 0 0 0 12-12.6l-4.15-82.57A247.17 247.17 0 0 0 255.83 504c121.11 0 221.93-86.92 243.55-201.82a12 12 0 0 0-11.8-14.18h-49.05a12 12 0 0 0-11.67 9.26A175.86 175.86 0 0 1 255.83 432z" fill="#222"/></svg>
<span class="t" style="left:400.00px;top:615px;font-size:17.0px;line-height:17px;color:#222;letter-spacing:-0.417px;">Refresh</span>
<div class="b" style="left:486.00px;top:606.00px;width:94.00px;height:34.00px;background:#fff;border:1px solid #ccc;border-radius:4px 0 0 4px;"></div>
<div class="b" style="left:579.00px;top:606.00px;width:38.00px;height:34.00px;background:#fff;border:1px solid #ccc;border-radius:0 4px 4px 0;"></div>
<svg class="b" style="left:499.50px;top:613.00px;" width="19.10" height="18.00" viewBox="0 0 512 512" preserveAspectRatio="none"><path d="M487.976 0H24.028C2.71 0-8.047 25.866 7.058 40.971L192 225.941V432c0 7.831 3.821 15.17 10.237 19.662l80 55.98C298.02 518.69 320 507.493 320 487.98V225.941l184.947-184.97C520.021 25.896 509.338 0 487.976 0z" fill="#222"/></svg>
<span class="t" style="left:527.60px;top:615px;font-size:17.0px;line-height:17px;color:#222;letter-spacing:0.292px;">Filter</span>
<svg class="b" style="left:590.20px;top:618.00px;" width="16.30" height="9.40" viewBox="0 0 16.30 9.40" ><path d="M0.86 0.86L8.15 7.67L15.44 0.86" fill="none" stroke="#222" stroke-width="2.40" stroke-linejoin="miter"/></svg>
<span class="t" style="left:354.50px;top:668px;font-size:17.0px;line-height:17px;color:#222;letter-spacing:0.283px;">Displaying</span>
<span class="t" style="left:441.30px;top:668px;font-size:17.0px;line-height:17px;color:#222;letter-spacing:-0.275px;word-spacing:1.70px;-webkit-text-stroke:0.40px #222;">1 - 7</span>
<span class="t" style="left:484.20px;top:668px;font-size:17.0px;line-height:17px;color:#222;letter-spacing:1.075px;word-spacing:0.34px;">out of</span>
<span class="t" style="left:538.70px;top:668px;font-size:17.0px;line-height:17px;color:#222;-webkit-text-stroke:0.40px #222;">7</span>
<span class="t" style="left:554.60px;top:668px;font-size:17.0px;line-height:17px;color:#222;letter-spacing:0.060px;">association(s).</span>
<svg class="b" style="left:349.00px;top:706.50px;" width="16.00" height="12.00" viewBox="0 65 512 382" preserveAspectRatio="none"><path d="M173.898 439.404l-166.4-166.4c-9.997-9.997-9.997-26.206 0-36.204l36.203-36.204c9.997-9.998 26.207-9.998 36.204 0L192 312.69 432.095 72.596c9.997-9.997 26.207-9.997 36.204 0l36.203 36.204c9.997 9.997 9.997 26.206 0 36.204l-294.4 294.401c-9.998 9.997-26.207 9.997-36.204-.001z" fill="#222"/></svg>
<span class="t" style="left:374.10px;top:708px;font-size:15.5px;line-height:16px;color:#222;letter-spacing:0.573px;word-spacing:1.55px;-webkit-text-stroke:0.12px #222;">Artifact Type</span>
<svg class="b" style="left:475.90px;top:709.50px;" width="30.50" height="7.60" viewBox="0 0 30.5 7.6" ><path d="M0 7.6L6.85 0L13.7 7.6Z" fill="#999"/><path d="M16.7 0H30.5L23.6 7.6Z" fill="#999"/></svg>
<span class="t" style="left:513.60px;top:708px;font-size:15.5px;line-height:16px;color:#222;letter-spacing:0.238px;-webkit-text-stroke:0.12px #222;">Name</span>
<svg class="b" style="left:562.10px;top:709.50px;" width="30.50" height="7.60" viewBox="0 0 30.5 7.6" ><path d="M0 7.6L6.85 0L13.7 7.6Z" fill="#999"/><path d="M16.7 0H30.5L23.6 7.6Z" fill="#999"/></svg>
<span class="t" style="left:791.30px;top:708px;font-size:15.5px;line-height:16px;color:#222;letter-spacing:0.260px;word-spacing:1.55px;-webkit-text-stroke:0.12px #222;">Creation Date</span>
<svg class="b" style="left:898.60px;top:709.50px;" width="30.50" height="7.60" viewBox="0 0 30.5 7.6" ><path d="M0 7.6L6.85 0L13.7 7.6Z" fill="#999"/><path d="M16.7 0H30.5L23.6 7.6Z" fill="#222"/></svg>
<span class="t" style="left:938.80px;top:708px;font-size:15.5px;line-height:16px;color:#222;-webkit-text-stroke:0.12px #222;">Creator</span>
<svg class="b" style="left:998.00px;top:709.50px;" width="30.50" height="7.60" viewBox="0 0 30.5 7.6" ><path d="M0 7.6L6.85 0L13.7 7.6Z" fill="#999"/><path d="M16.7 0H30.5L23.6 7.6Z" fill="#999"/></svg>
<span class="t" style="left:1063.80px;top:708px;font-size:15.5px;line-height:16px;color:#222;letter-spacing:0.451px;-webkit-text-stroke:0.12px #222;">Comment</span>
<svg class="b" style="left:1140.50px;top:709.50px;" width="30.50" height="7.60" viewBox="0 0 30.5 7.6" ><path d="M0 7.6L6.85 0L13.7 7.6Z" fill="#999"/><path d="M16.7 0H30.5L23.6 7.6Z" fill="#999"/></svg>
<span class="t" style="left:1800.00px;top:708px;font-size:15.5px;line-height:16px;color:#222;letter-spacing:-1.100px;-webkit-text-stroke:0.12px #222;">ID</span>
<svg class="b" style="left:1820.00px;top:709.50px;" width="30.50" height="7.60" viewBox="0 0 30.5 7.6" ><path d="M0 7.6L6.85 0L13.7 7.6Z" fill="#999"/><path d="M16.7 0H30.5L23.6 7.6Z" fill="#999"/></svg>
<div class="b" style="left:345.00px;top:733.00px;width:1538.00px;height:1.00px;background:#fdc826;"></div>
<div class="b" style="left:345.00px;top:734.00px;width:1538.00px;height:1.00px;background:#f8fafc;"></div>
<div class="b" style="left:345.00px;top:735.00px;width:1538.00px;height:38.50px;background:#f5f5f5;"></div>
<div class="b" style="left:349.00px;top:750.00px;width:16.00px;height:16.00px;background:#fff;border:1.5px solid #333;border-radius:.5px;"></div>
<div class="b" style="left:373.10px;top:737.40px;width:118.40px;height:32.20px;background:#fff;border:1px solid #ccc;border-radius:5px;"></div>
<div class="b" style="left:455.20px;top:738.40px;width:1.00px;height:28.20px;background:#ccc;"></div>
<span class="t" style="left:380.60px;top:746px;font-size:15.0px;line-height:15px;color:#333;letter-spacing:1.309px;word-spacing:1.50px;">-- Any --</span>
<svg class="b" style="left:466.40px;top:749.00px;" width="13.10" height="8.00" viewBox="0 0 13.10 8.00" ><path d="M0.76 0.76L6.55 6.49L12.34 0.76" fill="none" stroke="#222" stroke-width="2.10" stroke-linejoin="miter"/></svg>
<div class="b" style="left:513.00px;top:738.40px;width:256.60px;height:30.50px;background:#fff;border:1px solid #ccc;border-radius:4px;box-shadow:inset 0 1px 1px rgba(0,0,0,.075);"></div>
<span class="t" style="left:527.20px;top:746px;font-size:15.5px;line-height:16px;color:#999;letter-spacing:0.518px;">Filter</span>
<div class="b" style="left:791.30px;top:738.20px;width:139.50px;height:30.50px;background:#fff;border:1px solid #ccc;border-radius:4px;box-shadow:inset 0 1px 1px rgba(0,0,0,.075);"></div>
<div class="b" style="left:895.40px;top:739.20px;width:1.00px;height:28.50px;background:#ccc;"></div>
<svg class="b" style="left:906.30px;top:745.60px;" width="13.40" height="15.40" viewBox="0 0 14 16" ><path fill-rule="evenodd" fill="#222" d="M1.5 2H12.5Q14 2 14 3.5V5H0V3.5Q0 2 1.5 2ZM0 6H14V14.5Q14 16 12.5 16H1.5Q0 16 0 14.5ZM2 8V10.5H4.5V8ZM5.75 8V10.5H8.25V8ZM9.5 8V10.5H12V8ZM2 11.7V14.2H4.5V11.7ZM5.75 11.7V14.2H8.25V11.7ZM9.5 11.7V14.2H12V11.7Z"/><rect x="3" y="0" width="2" height="3.4" rx=".5" fill="#222"/><rect x="9" y="0" width="2" height="3.4" rx=".5" fill="#222"/></svg>
<div class="b" style="left:939.20px;top:737.60px;width:116.60px;height:32.20px;background:#fff;border:1px solid #ccc;border-radius:5px;"></div>
<div class="b" style="left:1020.20px;top:738.60px;width:1.00px;height:28.20px;background:#ccc;"></div>
<span class="t" style="left:945.80px;top:746px;font-size:15.0px;line-height:15px;color:#333;letter-spacing:1.284px;word-spacing:1.50px;">-- Any --</span>
<svg class="b" style="left:1031.50px;top:749.20px;" width="13.10" height="8.00" viewBox="0 0 13.10 8.00" ><path d="M0.76 0.76L6.55 6.49L12.34 0.76" fill="none" stroke="#222" stroke-width="2.10" stroke-linejoin="miter"/></svg>
<div class="b" style="left:1064.20px;top:738.20px;width:690.60px;height:30.50px;background:#fff;border:1px solid #ccc;border-radius:4px;box-shadow:inset 0 1px 1px rgba(0,0,0,.075);"></div>
<div class="b" style="left:1799.30px;top:738.20px;width:79.30px;height:30.50px;background:#fff;border:1px solid #ccc;border-radius:4px;box-shadow:inset 0 1px 1px rgba(0,0,0,.075);"></div>
<div class="b" style="left:349.00px;top:791.80px;width:16.00px;height:16.00px;background:#fff;border:1.0px solid #ccc;border-radius:.5px;"></div>
<span class="t" style="left:373.50px;top:794px;font-size:16.0px;line-height:16px;color:#222;letter-spacing:0.030px;">Requirement</span>
<svg class="b" style="left:516.60px;top:781.20px;" width="12.40" height="19.00" viewBox="0 0 12.4 19" ><path d="M6.2 0L12.4 9.5L6.2 19L0 9.5Z" fill="#8fadd8"/></svg>
<span class="t" style="left:550.30px;top:782px;font-size:16.0px;line-height:16px;color:#666;letter-spacing:0.199px;word-spacing:2.40px;text-decoration:underline;text-decoration-thickness:1px;text-underline-offset:2px;">Ability to add new books to</span>
<span class="t" style="left:513.60px;top:805px;font-size:16.0px;line-height:16px;color:#666;letter-spacing:0.049px;word-spacing:2.40px;text-decoration:underline;text-decoration-thickness:1px;text-underline-offset:2px;">the system</span>
<span class="t" style="left:791.30px;top:794px;font-size:16.0px;line-height:16px;color:#222;letter-spacing:-0.694px;">11-Jan-2021</span>
<span class="t" style="left:938.80px;top:794px;font-size:16.0px;line-height:16px;color:#222;letter-spacing:-0.496px;word-spacing:1.92px;">Fred Bloggs</span>
<span class="t" style="left:1063.80px;top:794px;font-size:16.0px;line-height:16px;color:#222;letter-spacing:-0.157px;word-spacing:1.92px;">Completes task</span>
<span class="t" style="left:1181.50px;top:794px;font-size:16.0px;line-height:16px;color:#222;letter-spacing:-0.384px;">[TK:2]</span>
<span class="t" style="left:1230.00px;top:794px;font-size:16.0px;line-height:16px;color:#222;letter-spacing:0.221px;word-spacing:1.92px;">for requirement</span>
<span class="t" style="left:1349.80px;top:794px;font-size:16.0px;line-height:16px;color:#222;letter-spacing:-0.548px;">[RQ:4]</span>
<span class="t" style="left:1400.40px;top:794px;font-size:16.0px;line-height:16px;color:#222;letter-spacing:-0.120px;word-spacing:1.92px;">and fixes bug</span>
<span class="t" style="left:1505.40px;top:794px;font-size:16.0px;line-height:16px;color:#222;letter-spacing:-0.388px;">[IN:7]</span>
<span class="t" style="left:1542.50px;top:794px;font-size:16.0px;line-height:16px;color:#222;">.</span>
<span class="t" style="left:1799.50px;top:794px;font-size:16.0px;line-height:16px;color:#222;letter-spacing:-0.648px;">[RQ:4]</span>
<div class="b" style="left:345.00px;top:828.30px;width:1538.00px;height:1.00px;background:#e5e5e5;"></div>
<div class="b" style="left:349.00px;top:846.80px;width:16.00px;height:16.00px;background:#fff;border:1.0px solid #ccc;border-radius:.5px;"></div>
<span class="t" style="left:373.50px;top:849px;font-size:16.0px;line-height:16px;color:#222;letter-spacing:0.346px;">Incident</span>
<svg class="b" style="left:514.60px;top:837.30px;" width="16.60" height="17.00" viewBox="0 0 16.6 17" ><path d="M1.2 0H15.4Q16.6 0 16.6 1.2V12.4L8.3 17L0 12.4V1.2Q0 0 1.2 0Z" fill="#e63946"/></svg>
<span class="t" style="left:550.30px;top:837px;font-size:16.0px;line-height:16px;color:#666;letter-spacing:-0.053px;word-spacing:2.40px;text-decoration:underline;text-decoration-thickness:1px;text-underline-offset:2px;">Cannot add a new book to the</span>
<span class="t" style="left:513.60px;top:860px;font-size:16.0px;line-height:16px;color:#666;letter-spacing:-0.108px;text-decoration:underline;text-decoration-thickness:1px;text-underline-offset:2px;">system</span>
<span class="t" style="left:791.30px;top:849px;font-size:16.0px;line-height:16px;color:#222;letter-spacing:-0.694px;">11-Jan-2021</span>
<span class="t" style="left:938.80px;top:849px;font-size:16.0px;line-height:16px;color:#222;letter-spacing:-0.114px;word-spacing:1.92px;">Joe P Smith</span>
<span class="t" style="left:1063.80px;top:849px;font-size:16.0px;line-height:16px;color:#222;letter-spacing:-0.157px;word-spacing:1.92px;">Completes task</span>
<span class="t" style="left:1181.50px;top:849px;font-size:16.0px;line-height:16px;color:#222;letter-spacing:-0.384px;">[TK:2]</span>
<span class="t" style="left:1230.00px;top:849px;font-size:16.0px;line-height:16px;color:#222;letter-spacing:0.221px;word-spacing:1.92px;">for requirement</span>
<span class="t" style="left:1349.80px;top:849px;font-size:16.0px;line-height:16px;color:#222;letter-spacing:-0.548px;">[RQ:4]</span>
<span class="t" style="left:1400.40px;top:849px;font-size:16.0px;line-height:16px;color:#222;letter-spacing:-0.120px;word-spacing:1.92px;">and fixes bug</span>
<span class="t" style="left:1505.40px;top:849px;font-size:16.0px;line-height:16px;color:#222;letter-spacing:-0.388px;">[IN:7]</span>
<span class="t" style="left:1542.50px;top:849px;font-size:16.0px;line-height:16px;color:#222;">.</span>
<span class="t" style="left:1799.50px;top:849px;font-size:16.0px;line-height:16px;color:#222;letter-spacing:-0.468px;">[IN:7]</span>
<div class="b" style="left:345.00px;top:883.30px;width:1538.00px;height:1.00px;background:#e5e5e5;"></div>
<div class="b" style="left:349.00px;top:901.80px;width:16.00px;height:16.00px;background:#fff;border:1.0px solid #ccc;border-radius:.5px;"></div>
<span class="t" style="left:373.50px;top:904px;font-size:16.0px;line-height:16px;color:#222;letter-spacing:-0.620px;">Task</span>
<svg class="b" style="left:514.20px;top:892.50px;" width="17.40" height="17.20" viewBox="0 0 17.4 17.2" ><path d="M13.6 0L17.4 2L8.6 17.2L0 10.6L2.6 7.4L7.4 10.9Z" fill="#00d09c"/></svg>
<span class="t" style="left:550.30px;top:892px;font-size:16.0px;line-height:16px;color:#666;letter-spacing:0.028px;word-spacing:2.40px;text-decoration:underline;text-decoration-thickness:1px;text-underline-offset:2px;">Create book object insert</span>
<span class="t" style="left:791.30px;top:904px;font-size:16.0px;line-height:16px;color:#222;letter-spacing:-0.694px;">11-Jan-2021</span>
<span class="t" style="left:938.80px;top:904px;font-size:16.0px;line-height:16px;color:#222;letter-spacing:-0.496px;word-spacing:1.92px;">Fred Bloggs</span>
<span class="t" style="left:1063.80px;top:904px;font-size:16.0px;line-height:16px;color:#222;letter-spacing:-0.157px;word-spacing:1.92px;">Completes task</span>
<span class="t" style="left:1181.50px;top:904px;font-size:16.0px;line-height:16px;color:#222;letter-spacing:-0.384px;">[TK:2]</span>
<span class="t" style="left:1230.00px;top:904px;font-size:16.0px;line-height:16px;color:#222;letter-spacing:0.221px;word-spacing:1.92px;">for requirement</span>
<span class="t" style="left:1349.80px;top:904px;font-size:16.0px;line-height:16px;color:#222;letter-spacing:-0.548px;">[RQ:4]</span>
<span class="t" style="left:1400.40px;top:904px;font-size:16.0px;line-height:16px;color:#222;letter-spacing:-0.120px;word-spacing:1.92px;">and fixes bug</span>
<span class="t" style="left:1505.40px;top:904px;font-size:16.0px;line-height:16px;color:#222;letter-spacing:-0.388px;">[IN:7]</span>
<span class="t" style="left:1542.50px;top:904px;font-size:16.0px;line-height:16px;color:#222;">.</span>
<span class="t" style="left:1799.50px;top:904px;font-size:16.0px;line-height:16px;color:#222;letter-spacing:-0.444px;">[TK:2]</span>
<div class="b" style="left:345.00px;top:938.30px;width:1538.00px;height:1.00px;background:#e5e5e5;"></div>
</body></html>
